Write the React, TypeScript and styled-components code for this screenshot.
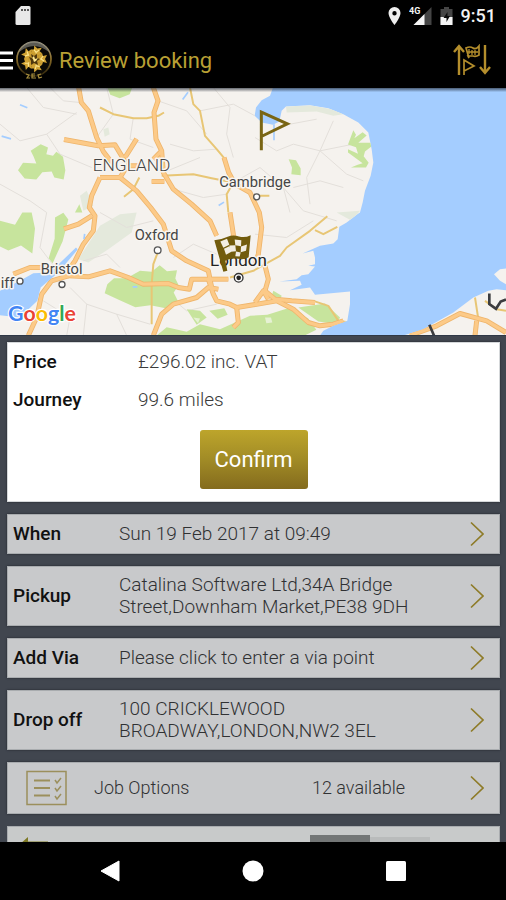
import React from "react";
import styled, { createGlobalStyle } from "styled-components";

const GlobalStyle = createGlobalStyle`
  * { box-sizing: border-box; }
  body {
    margin: 0;
    background: #000;
    font-family: Roboto, "Liberation Sans", sans-serif;
  }
  button { font-family: inherit; }
`;

const Screen = styled.div`
  display: flex;
  flex-direction: column;
  height: 100vh;
  background: #41464f;
  overflow: hidden;
`;

const StatusBar = styled.div`
  flex: none;
  display: flex;
  align-items: center;
  height: 32px;
  padding: 0 10px 0 15px;
  background: #000;
  color: #f2f2f2;
`;

const StatusGroup = styled.div`
  display: flex;
  align-items: center;
  gap: 8px;
  margin-left: auto;
`;

const Clock = styled.time`
  font-size: 18px;
  font-weight: 500;
  line-height: 20px;
`;

const Header = styled.header`
  flex: none;
  display: flex;
  align-items: center;
  height: 56px;
  padding-right: 14px;
  background: #000;
`;

const IconButton = styled.button`
  display: flex;
  padding: 0;
  border: 0;
  background: none;
  cursor: pointer;
`;

const Title = styled.h1`
  flex: 1;
  margin: 0 0 0 6px;
  padding-top: 2px;
  color: #b9a034;
  font-size: 22px;
  font-weight: 400;
  line-height: 28px;
`;

const Content = styled.main`
  flex: 1;
  min-height: 0;
  overflow: hidden;
`;

const MapView = styled.svg`
  display: block;
  width: 100%;
  height: 248px;
  background: #a4cdff;
  border-bottom: 1px solid #2f3846;
  font-family: Roboto, sans-serif;
`;

const Stack = styled.div`
  display: flex;
  flex-direction: column;
  gap: 12px;
  padding: 6px 6px 12px 7px;
`;

const Summary = styled.section`
  display: flex;
  flex-direction: column;
  align-items: center;
  height: 160px;
  padding: 0 5px 12px;
  background: #fff;
  border: 1px solid #d5d8da;
  box-shadow: 0 0 2px #20242b;
`;

const Facts = styled.dl`
  align-self: stretch;
  display: grid;
  grid-template-columns: 125px 1fr;
  grid-auto-rows: 36px;
  row-gap: 2px;
  align-items: center;
  margin: 0;
  font-size: 19px;
`;

const Term = styled.dt`
  color: #111;
  font-weight: 500;
`;

const Detail = styled.dd`
  margin: 0;
  color: #3b3b3b;
  font-weight: 300;
`;

const ConfirmButton = styled.button`
  margin-top: auto;
  width: 108px;
  height: 59px;
  padding: 0;
  border: 0;
  border-radius: 3px;
  background: linear-gradient(#bda52b, #a18b26 50%, #846b1d);
  color: #fff;
  font-size: 22px;
  cursor: pointer;
`;

const RowButton = styled.button<{ $height: number }>`
  display: flex;
  align-items: center;
  width: 100%;
  min-height: ${(p) => p.$height}px;
  padding: 0 15px 0 5px;
  border: 1px solid #a9acaf;
  background: #c8c9cb;
  box-shadow: 0 0 2px #20242b;
  color: #303133;
  font-size: 19px;
  line-height: 22px;
  text-align: left;
  cursor: pointer;
`;

const RowLabel = styled.span`
  flex: 0 0 106px;
  color: #111;
  font-weight: 500;
`;

const RowValue = styled.span`
  flex: 1;
  padding-right: 56px;
  font-weight: 300;
`;

const OptionsIcon = styled.span`
  display: flex;
  flex: 0 0 81px;
  padding-left: 13px;
`;

const OptionsText = styled.span<{ $grow?: boolean }>`
  flex: ${(p) => (p.$grow ? "1 1 0" : "0 0 158px")};
  font-size: 18px;
  font-weight: 300;
`;

const PaymentRow = styled.section`
  display: flex;
  align-items: flex-start;
  justify-content: space-between;
  height: 52px;
  padding: 8px 69px 0 12px;
  border: 1px solid #a9acaf;
  background: #c8caca;
`;

const Segments = styled.div`
  display: flex;
  align-items: flex-start;
`;

const Segment = styled.button<{ $active?: boolean }>`
  width: 60px;
  height: 30px;
  margin-top: ${(p) => (p.$active ? 0 : 2)}px;
  padding: 0;
  border: 0;
  background: ${(p) => (p.$active ? "#737676" : "#b9bbbb")};
`;

const NavBar = styled.nav`
  flex: none;
  display: flex;
  justify-content: center;
  align-items: center;
  gap: 121px;
  height: 58px;
  background: #000;
`;

function Chevron() {
  return (
    <svg width="14" height="26" viewBox="0 0 14 26" fill="none" stroke="#8e7b28" strokeWidth="1.7" aria-hidden="true">
      <path d="M1 1.5 13 13 1 24.5" />
    </svg>
  );
}

function Logo() {
  const arms = [18, 90, 162, 234, 306];
  return (
    <svg width="38" height="40" viewBox="0 0 38 40" aria-hidden="true">
      <defs>
        <linearGradient id="ring" x1="0" y1="0" x2="0" y2="1">
          <stop offset="0" stopColor="#aaa592" />
          <stop offset="0.5" stopColor="#8a6d28" />
          <stop offset="1" stopColor="#2c220a" />
        </linearGradient>
      </defs>
      <circle cx="19" cy="19" r="17" fill="#0b0a06" stroke="url(#ring)" strokeWidth="1.7" />
      <path d="M4 12a16 16 0 0 1 30 0Q19 0 4 12Z" fill="#77766d" opacity=".75" />
      {arms.map((r) => (
        <g key={r} transform={`rotate(${r} 19 19)`}>
          <path d="M16 15 13 11l3-1-1-4 4 2 4-2-1 4 3 1-3 4Z" fill="#d0a233" />
          <path d="M16 10l3 2 2-3M19 15v-3" fill="none" stroke="#fbe48c" strokeWidth="1.2" />
        </g>
      ))}
      <circle cx="19" cy="19" r="6" fill="#c79a2f" />
      <path d="m14 17 3 1-1-4 3 2 3-2v4l3 1-3 2 1 4-4-2-3 2v-4Z" fill="#4d360d" />
      <path d="m17 18 2-2 1 3 3-1-2 3-2 1-1-3Z" fill="#ffe68b" />
      <path d="m11 34 3 1-2 3h3m5-4h-3v4h4m-4-2h3m6-2-3 1 1 3 3-1" fill="none" stroke="#a88f3f" strokeWidth="1.2" />
    </svg>
  );
}

function RouteIcon() {
  return (
    <svg width="40" height="32" viewBox="0 0 40 32" fill="none" stroke="#b48e2c" strokeWidth="1.7" aria-hidden="true">
      <path d="M7 31V3M2 8l5-6 5 6M33 1v27m-5-5 5 6 5-6" strokeWidth="2.4" />
      <path d="M12 31V16l10 6-10 5" />
      <path d="M14 4q4-2 7 0t6-2v9q-3 2-6 1l-5 0 1 2Z" />
      <path d="M17 5v5m3-4v5m3-5v5m-7-3h10" strokeWidth="1.3" />
    </svg>
  );
}

function StatusIcons() {
  return (
    <>
      <svg width="13" height="20" viewBox="0 0 13 20" aria-hidden="true">
        <path fillRule="evenodd" fill="#eee" d="M6.500 1A6 6 0 0 0 .5 7c0 4.500 6 12 6 12s6-7.500 6-12a6 6 0 0 0-6-6Zm0 4a2.200 2.200 0 1 1 0 4.400 2.200 2.200 0 0 1 0-4.400Z" />
      </svg>
      <svg width="23" height="20" viewBox="0 0 23 20" aria-hidden="true">
        <path d="M22.500 1v18h-18Z" fill="#444" />
        <path d="M15.500 8v11h-11Z" fill="#f5f5f5" />
        <text x="0" y="8" fill="#f5f5f5" fontSize="9" fontWeight="700">4G</text>
      </svg>
      <svg width="13" height="20" viewBox="0 0 13 20" aria-hidden="true">
        <path d="M4 1h5v2h3.500v16H.5V3H4Z" fill="#454545" />
        <path d="M.5 11h12v8H.5Z" fill="#f5f5f5" />
        <path d="M7.500 6 3.500 12h3v4l3.500-6H7.500Z" fill="#0a0a0a" />
      </svg>
    </>
  );
}

const parks = [
  "M322 0h75l-8 20-30 12-28-10Z",
  "M92 190l30-20 22 10-5 20 20 5 10-12 20 15 7 40-5 28-28-6-8-18-28 2-18 22-35-3-20-25 15-22 40 2-8-20Z",
  "M238 350 225 375h22Z",
  "M0 400l45 12 22-37h28l10 48-8 75-34-24-38 15-25-12Z",
  "M165 390l25-14 15 20-17 65-30 66-12-15 18-58Z",
  "M322 590l20-18 38 0 40-22 35 3 24-20 22 18 30-3-5 25 10 20-15 22 15 30-35 18-50-10-45 6-50-22-42-20Z",
  "M470 744l30-25 60 14 40-23 60 15 45-20 45-20 52-3 62-20 60 30 25 35-35 17Z",
  "M560 665l40 5 20 20-30 22Z",
  "M628 670l45-8 10 20-30 12Z",
  "M895 660l80-12 45 42-10 20-55-8Z",
  "M820 610l25 15-8 20-25-10Z",
  "M866 215l22 3 14 25 0 20-28-3 2-20Z",
  "M1060 128l8 14-5 10 25-18 12 10-25 22 40 0 0 10-20 16-4 14 15 20-8 14-45 0 20-8 15-5-44-32 0-10 30 14-6-20-24-8Z",
];

const motorways = [
  "M236 0 244 45 265 70 290 150 310 192 335 225",
  "M300 270 275 325 268 360 285 385 280 430 250 470 225 520 205 548",
  "M192 156 295 175 345 172 365 205 382 235 360 270 300 270",
  "M410 154 375 210 M382 235h40",
  "M460 0 474 40 462 75 468 155 485 190 460 215M485 190 490 255 520 305 575 350 630 400 650 445",
  "M360 270 410 310 452 360 490 410 515 490 560 520 625 550 635 600",
  "M672 210 686 255 705 290 750 315 778 375 785 420 775 500 765 530",
  "M192 424 235 410 275 385",
  "M40 560 90 540 150 540 205 565 265 568 330 550 385 570 430 590 505 588 535 600 568 605 575 575 625 575 640 620 650 640 690 650 710 660 760 652 830 640 880 665 925 705 960 715 1000 710 1030 700",
  "M85 744 110 690 125 620 155 580 205 565",
  "M460 744 485 680 520 650 590 630 625 600 655 605",
  "M710 660 715 705 700 720",
  "M690 375 700 440 700 470",
  "M625 575h60",
  "M795 535 805 575 795 610 825 635 875 640 945 645",
  "M765 645 790 610 805 635",
  "M1230 744 1310 715 1380 678 1460 700 1518 735",
  "M1425 744 1430 700",
  "M455 282h38",
];

const aRoads = [
  "M300 60 340 80 400 92 440 92 475 85 492 75",
  "M570 0 580 50 600 70 615 145 650 185 675 215",
  "M485 265 580 260 635 272 700 285 680 320 685 375",
  "M418 270 400 305 372 328",
  "M475 490 460 530 455 590 455 710",
  "M795 530 840 505 860 480 930 430 982 386",
  "M945 428 970 440 1012 418",
  "M690 570 760 550 795 530",
  "M770 325h38",
  "M940 640 985 655 1015 700 1042 704",
  "M1425 630 1435 695M1455 640 1490 665 1518 670",
];

function RouteMap() {
  return (
    <MapView viewBox="0 0 1518 744" preserveAspectRatio="xMidYMid slice" role="img" aria-label="Map of southern England">
      <defs>
        <clipPath id="land">
          <path d="M0 0H819L810 25 785 38 768 60 764 85 785 105 819 112 838 102 845 70 858 57 930 53 985 62 1030 80 1075 105 1105 135 1115 185 1120 225 1112 265 1095 310 1088 345 1080 375 1070 382 1040 405 1018 418 1013 455 1000 468 960 475 908 498 940 490 945 510 945 530 925 535 945 537 925 560 905 563 890 575 838 582 900 580 905 592 870 608 930 600 945 622 1050 612 1050 650 1042 700 1000 715 970 730 960 744H0ZM1210 744 1270 725 1360 675 1420 630 1465 610 1490 605 1518 608V744ZM1482 560 1500 545 1518 543V590L1500 580Z" />
        </clipPath>
        <linearGradient id="topShade" x1="0" y1="0" x2="0" y2="1">
          <stop offset="0" stopColor="#1d2430" stopOpacity=".75" />
          <stop offset="1" stopColor="#1d2430" stopOpacity="0" />
        </linearGradient>
      </defs>
      <g clipPath="url(#land)">
        <rect width="1518" height="744" fill="#f5f2ee" />
        <g fill="#e4e9dc">
          <path d="M858 57 930 53 1000 66 1030 80 1000 85 950 72 860 75ZM300 415l60-35 50-5-15 60-70 50-60 40-30-10ZM240 325l20-15 20 45-30 15ZM310 125l15-5 4 20-15 8ZM1010 375l70-5-25 30Z" />
        </g>
        <g fill="none" stroke="#e3dfda" strokeWidth="3">
          <path d="M0 110 60 160 140 140 230 75M80 0 130 60 230 80M0 290 90 340 140 375 120 480 180 560M150 0 190 40 240 45M140 140 180 200 275 240M320 0 340 80 290 150M400 90 390 155 460 180M474 40 560 70 620 140M510 170 580 190 650 185M490 255 600 210M520 305 610 330 680 320M600 70 700 50 765 85M640 0 690 60 680 140 700 210M700 285 780 240 850 300 870 375M765 150 830 190 880 170 960 190 1060 170M800 140 870 110 950 95M960 190 1000 100M960 190 920 270 930 350M960 190 1040 260 1090 280M880 300 960 280 1030 300M850 300 910 370 1010 400M765 440 860 450 940 400M300 375 380 420 460 400M250 520 320 500 360 540M210 600 260 650 350 680 450 710M250 744 260 650M350 680 380 744M130 640 210 690 200 744M520 510 580 470 650 500M500 620 560 670 650 650" />
        </g>
        <g fill="#c7e49d">{parks.map((d) => <path key={d} d={d} />)}</g>
        <path d="M795 690l18 0 4 15-18 2ZM580 690l20 3-6 14Z" fill="#e6f1d4" />
        <g fill="none" stroke="#e8c675" strokeWidth="6" strokeLinejoin="round">
          {aRoads.map((d) => <path key={d} d={d} />)}
        </g>
        <g fill="none" stroke="#efb56b" strokeWidth="15" strokeLinejoin="round">
          {motorways.map((d) => <path key={d} d={d} />)}
        </g>
        <g fill="none" stroke="#fcca88" strokeWidth="10" strokeLinejoin="round">
          {motorways.map((d) => <path key={d} d={d} />)}
        </g>
      </g>
      <path d="M0 610 60 580 100 557 150 555 228 480 233 486 175 555 122 600 112 640 60 690 0 683Z" fill="#a4cdff" />
      <path d="M60 52l22 9M5 146l28 8M548 36l16-22M656 354l16-10M398 598h14M252 455l2-16M822 110v48" stroke="#a4cdff" strokeWidth="5" />
      <path d="M1288 712l14 32M1468 618v32l20 14 14-22 16-6" fill="none" stroke="#3c3d40" strokeWidth="8" />
      <rect width="1518" height="14" fill="url(#topShade)" />

      <g fill="#454545" stroke="#f8f5f1" strokeWidth="9" strokeLinejoin="round" paintOrder="stroke" fontSize="44">
        <text x="278" y="251" fontSize="52" fontWeight="300" fill="#444">ENGLAND</text>
        <text x="658" y="299">Cambridge</text>
        <text x="404" y="458">Oxford</text>
        <text x="122" y="560">Bristol</text>
        <text x="2" y="600">iff</text>
        <text x="630" y="534" fontSize="51" fill="#222">London</text>
      </g>
      <g fill="#fff" stroke="#555" strokeWidth="4">
        <circle cx="770" cy="328" r="9" />
        <circle cx="473" cy="488" r="10" />
        <circle cx="186" cy="591" r="9" />
        <circle cx="60" cy="581" r="9" />
        <circle cx="716" cy="571" r="13" stroke="#333" />
      </g>
      <circle cx="716" cy="571" r="7" fill="#222" />

      <path d="M784 188V74l78 35-78 38" fill="none" stroke="#796514" strokeWidth="9" />
      <path d="M643 458q24-2 40-10t34-1q18 5 35-4l-6 66q-12 9-32 5t-38 6l6 30-12 3Z" fill="#725c0c" />
      <g fill="#f2eee2">
        <path d="M661 462l20-8 7 18-18 9ZM704 456l20 2-1 18-17-3ZM688 474l18-1 2 18-15 2ZM723 477l18-6-3 19-16 4ZM672 484l16-8 6 17-16 9ZM708 492l14 3-3 12-13-1Z" />
      </g>
      <text x="24" y="701" fontFamily="Lato, sans-serif" fontSize="64" stroke="#fff" strokeWidth="7" paintOrder="stroke" fontWeight="700">
        <tspan fill="#4285f4">G</tspan><tspan fill="#ea4335">o</tspan><tspan fill="#fbbc05">o</tspan><tspan fill="#4285f4">g</tspan><tspan fill="#34a853">l</tspan><tspan fill="#ea4335">e</tspan>
      </text>
    </MapView>
  );
}

const bookingRows = [
  { label: "When", value: "Sun 19 Feb 2017 at 09:49", height: 40 },
  { label: "Pickup", value: "Catalina Software Ltd,34A Bridge Street,Downham Market,PE38 9DH", height: 60 },
  { label: "Add Via", value: "Please click to enter a via point", height: 40 },
  { label: "Drop off", value: "100 CRICKLEWOOD BROADWAY,LONDON,NW2 3EL", height: 60 },
];

export default function App() {
  return (
    <Screen>
      <GlobalStyle />
      <StatusBar>
        <svg width="16" height="20" viewBox="0 0 16 20" aria-hidden="true">
          <path d="M6 0h8q1.500 0 1.500 1.500v16q0 1.500-1.500 1.500H2Q.5 19 .5 17.500V6Z" fill="#e8e8e8" />
          <path d="M7 3v2m3-2v2m3-2v2" stroke="#333" strokeWidth="1.600" />
        </svg>
        <StatusGroup>
          <StatusIcons />
          <Clock>9:51</Clock>
        </StatusGroup>
      </StatusBar>

      <Header>
        <IconButton aria-label="Open menu">
          <svg width="15" height="20" viewBox="0 0 15 20" aria-hidden="true">
            <path d="M0 3h13M0 10.500h13M0 18h13" stroke="#fff" strokeWidth="3" />
          </svg>
        </IconButton>
        <Logo />
        <Title>Review booking</Title>
        <IconButton aria-label="Swap pickup and drop off">
          <RouteIcon />
        </IconButton>
      </Header>

      <Content>
        <RouteMap />
        <Stack>
          <Summary>
            <Facts>
              <Term>Price</Term>
              <Detail>£296.02 inc. VAT</Detail>
              <Term>Journey</Term>
              <Detail>99.6 miles</Detail>
            </Facts>
            <ConfirmButton>Confirm</ConfirmButton>
          </Summary>

          {bookingRows.map((row) => (
            <RowButton key={row.label} $height={row.height}>
              <RowLabel>{row.label}</RowLabel>
              <RowValue>{row.value}</RowValue>
              <Chevron />
            </RowButton>
          ))}

          <RowButton $height={52}>
            <OptionsIcon>
              <svg width="42" height="36" viewBox="0 0 42 36" fill="none" stroke="#9b8f5c" strokeWidth="1.500" aria-hidden="true">
                <path d="M1 1.500h39v33H1Z" />
                <path d="M8 10.500h16M8 18h16M8 25.500h16" strokeWidth="2" />
                <path d="m29 10 2 3 4-5m-6 10 2 3 4-5m-6 10 2 3 4-5" />
              </svg>
            </OptionsIcon>
            <OptionsText $grow>Job Options</OptionsText>
            <OptionsText>12 available</OptionsText>
            <Chevron />
          </RowButton>

          <PaymentRow>
            <IconButton aria-label="Back">
              <svg width="30" height="24" viewBox="0 0 30 24" aria-hidden="true">
                <path d="M0 9 8 2v4.500h20v5H8V17Z" fill="#7d7823" />
              </svg>
            </IconButton>
            <Segments>
              <Segment $active aria-label="First option" />
              <Segment aria-label="Second option" />
            </Segments>
          </PaymentRow>
        </Stack>
      </Content>

      <NavBar>
        <IconButton aria-label="Back">
          <svg width="22" height="22" viewBox="0 0 22 22" aria-hidden="true">
            <path d="M20 1v20L2 11Z" fill="#fff" stroke="#fff" strokeLinejoin="round" />
          </svg>
        </IconButton>
        <IconButton aria-label="Home">
          <svg width="22" height="22" viewBox="0 0 22 22" aria-hidden="true">
            <circle cx="11" cy="11" r="10.500" fill="#fff" />
          </svg>
        </IconButton>
        <IconButton aria-label="Recent apps">
          <svg width="22" height="22" viewBox="0 0 22 22" aria-hidden="true">
            <rect x="1" y="1" width="20" height="20" rx="1.500" fill="#fff" />
          </svg>
        </IconButton>
      </NavBar>
    </Screen>
  );
}
